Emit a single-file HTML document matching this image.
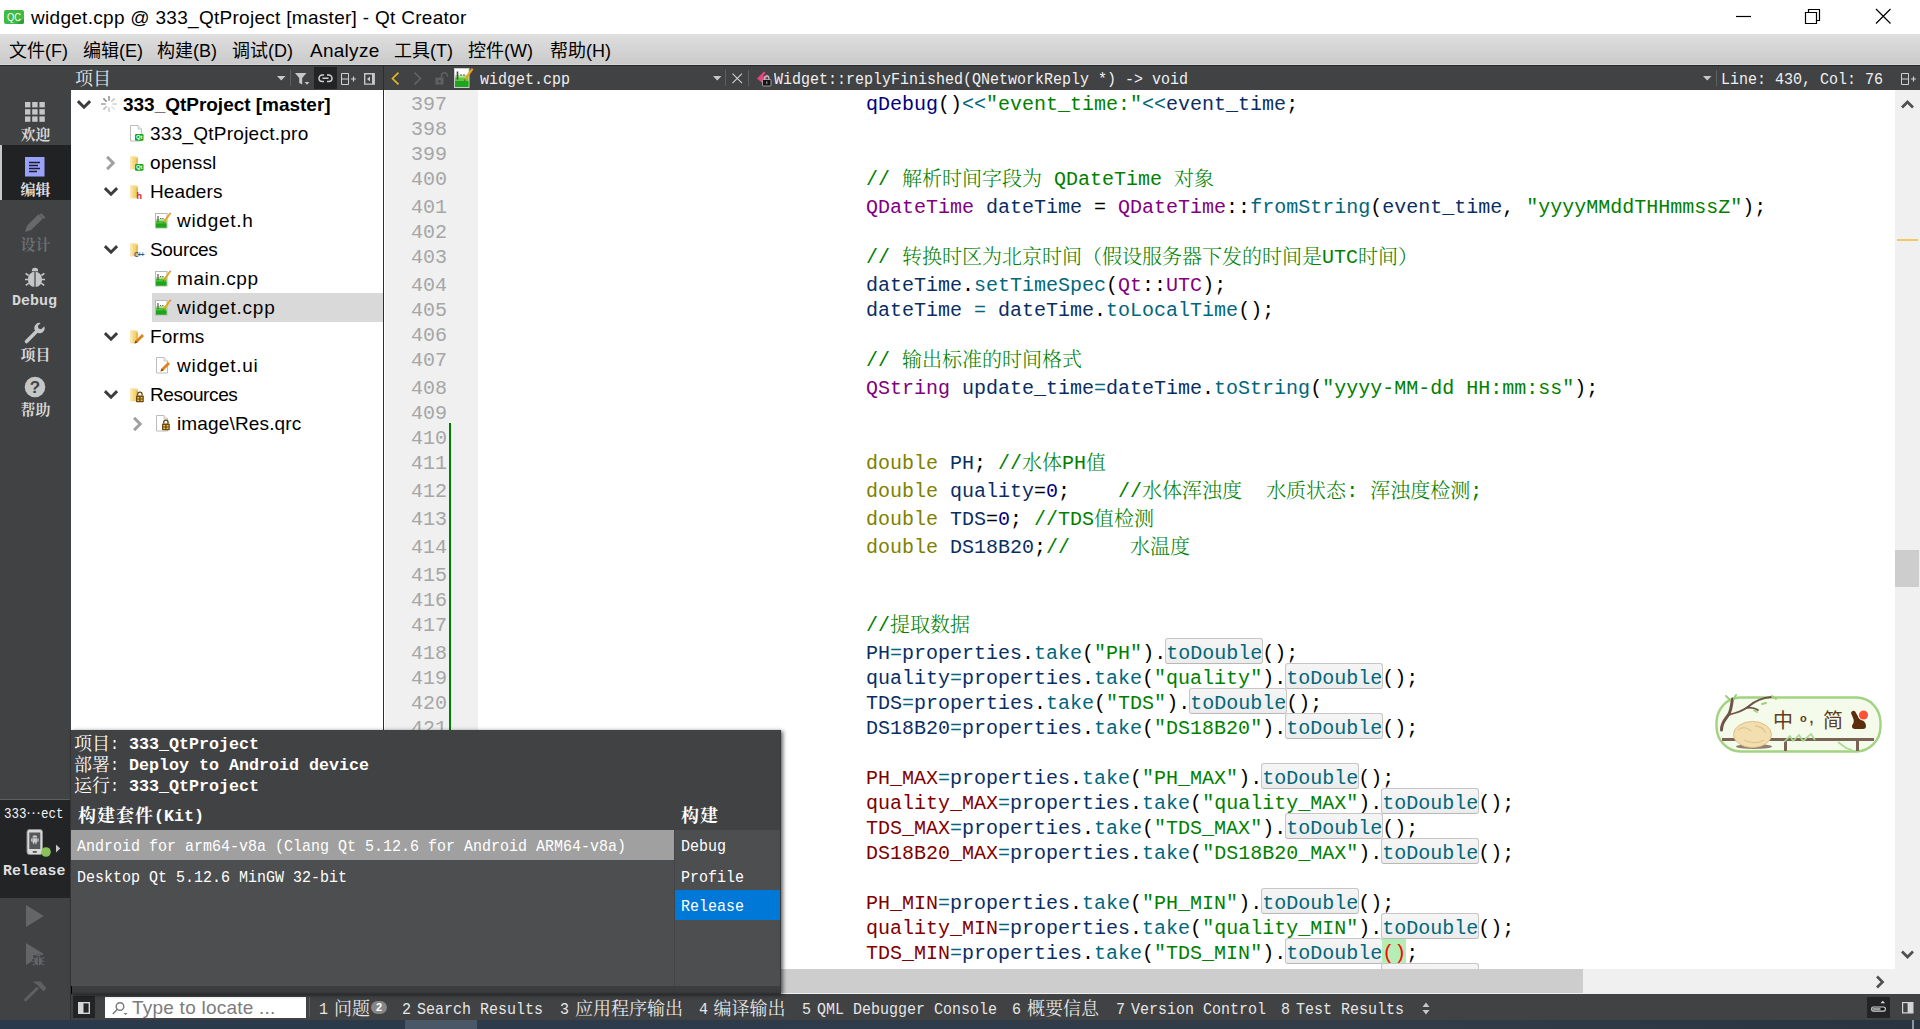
<!DOCTYPE html>
<html lang="zh-CN">
<head>
<meta charset="utf-8">
<title>widget.cpp @ 333_QtProject [master] - Qt Creator</title>
<style>
html,body{margin:0;padding:0;}
body{width:1920px;height:1029px;overflow:hidden;background:#fff;position:relative;font-family:"Liberation Sans","Noto Sans CJK SC",sans-serif;}
.abs{position:absolute;}
svg{position:absolute;overflow:visible;}
/* ---- title bar ---- */
#title{left:0;top:0;width:1920px;height:34px;background:#fff;}
#title .tt{left:31px;top:5px;font-size:19px;line-height:26px;color:#000;white-space:nowrap;letter-spacing:.29px;}
/* ---- menu ---- */
#menu{left:0;top:34px;width:1920px;height:31px;background:linear-gradient(#dfdfdf,#cacaca 30px,#d6d6d6 30px);}
#menu span{position:absolute;top:4px;font-size:18px;line-height:26px;color:#000;white-space:nowrap;font-family:"Liberation Sans","Noto Sans CJK SC",sans-serif;}
/* ---- dark chrome ---- */
#side{left:0;top:65px;width:71px;height:955px;background:#404244;}
#tbar{left:71px;top:65px;width:1849px;height:25px;background:#404244;}
#tbtop{left:0;top:65px;width:1920px;height:1px;background:#28292a;}
.sfont{font-family:"Liberation Mono","Noto Serif CJK SC",monospace;}
.cjk{font-family:"Liberation Serif","Noto Serif CJK SC",serif;}
.modelbl{position:absolute;left:0;width:71px;text-align:center;color:#d6d6d6;font-size:15px;line-height:18px;font-weight:700;white-space:nowrap;}
/* ---- project tree ---- */
#tree{left:71px;top:90px;width:312px;height:640px;background:#fff;}
.ti{position:absolute;font-size:19px;line-height:29px;height:29px;color:#000;white-space:nowrap;}
/* ---- editor ---- */
#split{left:383px;top:90px;width:1px;height:640px;background:#2d2e30;}
#gutter{left:385px;top:90px;width:93px;height:879px;background:#f0f0f0;overflow:hidden;}
#editor{left:478px;top:90px;width:1417px;height:879px;background:#fff;overflow:hidden;z-index:0;}
.ln{position:absolute;left:0;width:62px;text-align:right;height:25px;line-height:25px;font-size:20px;color:#a6a6a6;font-family:"Liberation Mono",monospace;}
.cl{position:absolute;left:388px;height:25px;line-height:25px;font-size:20px;color:#000;white-space:pre;font-family:"Liberation Mono","Noto Serif CJK SC",monospace;}
.cl i{font-style:normal;font-family:"Noto Serif CJK SC",serif;font-size:20px;line-height:0;font-weight:300;position:relative;top:1px;}
.k{color:#808000}.t{color:#800080}.f{color:#00677c}.v{color:#092e64}.s{color:#008000}.c{color:#008000}.n{color:#000080}.m{color:#800000}.q{color:#000080}.o{color:#00677c}
.box{position:relative;}
.box::before{content:"";position:absolute;left:-1px;right:-1px;top:-4px;height:24px;border:1px solid #c6c6c6;border-bottom-color:#b8b8b8;background:linear-gradient(#f5f5f5,#ececec);border-radius:3px;z-index:-1;}
.hl{position:relative;color:#ff0000;}
.hl::before{content:"";position:absolute;left:0;right:0;top:-3px;height:24px;background:#b4eeb4;z-index:-1;}
#vsb{left:1895px;top:90px;width:25px;height:879px;background:#f0f0f0;}
#hsb{left:781px;top:969px;width:1139px;height:25px;background:#f0f0f0;}
/* ---- status ---- */
#status{left:71px;top:994px;width:1849px;height:26px;background:#404244;}
#status .st{position:absolute;top:5px;font-size:15px;line-height:20px;color:#e6e6e6;white-space:pre;font-family:"Liberation Mono","Noto Serif CJK SC",monospace;}
#taskbar{left:0;top:1020px;width:1920px;height:9px;background:linear-gradient(90deg,#2a3a4c,#2d3b4b 40%,#333d49 70%,#2a3440);}
/* ---- popup ---- */
#popup{left:71px;top:730px;width:710px;height:264px;background:#404244;box-shadow:2px 1px 4px rgba(0,0,0,.6);}
#popup .pl{position:absolute;left:4px;font-size:17px;line-height:21px;color:#fff;white-space:pre;font-family:"Liberation Mono","Noto Serif CJK SC",monospace;}
#popup .it{position:absolute;font-size:15px;line-height:30px;color:#fff;white-space:pre;font-family:"Liberation Mono","Noto Serif CJK SC",monospace;}
</style>
</head>
<body>
<!-- title bar -->
<div id="title" class="abs">
  <svg style="left:4px;top:10px" width="20" height="14" viewBox="0 0 20 14"><rect x="0" y="0" width="20" height="14" rx="2" fill="#3dbb45"/><path d="M20 9v3a2 2 0 0 1-2 2h-6z" fill="#2f9e38"/><text x="10" y="11" font-family="Liberation Sans,sans-serif" font-size="10" fill="#fff" text-anchor="middle" textLength="14" lengthAdjust="spacingAndGlyphs">QC</text></svg>
  <div class="abs tt">widget.cpp @ 333_QtProject [master] - Qt Creator</div>
  <svg style="left:1735px;top:0" width="185" height="34" viewBox="0 0 185 34" fill="none" stroke="#000" stroke-width="1.2">
    <path d="M1 16.5h15"/>
    <path d="M70.500 12.500h11v11h-11z M73.500 12.500v-3h11v11h-3"/>
    <path d="M141 9l14.500 14.500 M155.500 9l-14.500 14.500"/>
  </svg>
</div>
<!-- menu bar -->
<div id="menu" class="abs">
  <span style="left:9px">文件(F)</span><span style="left:83px">编辑(E)</span><span style="left:157px">构建(B)</span><span style="left:232px">调试(D)</span><span style="left:310px;font-size:19px;letter-spacing:.27px">Analyze</span><span style="left:394px">工具(T)</span><span style="left:468px">控件(W)</span><span style="left:550px">帮助(H)</span>
</div>
<!-- sidebar -->
<div id="side" class="abs">
  <!-- welcome -->
  <svg style="left:25px;top:37px" width="20" height="20" viewBox="0 0 20 20" fill="#c6c6c6"><rect x="0" y="0" width="5.4" height="5.4"/><rect x="7.2" y="0" width="5.4" height="5.4"/><rect x="14.4" y="0" width="5.4" height="5.4"/><rect x="0" y="7.2" width="5.4" height="5.4"/><rect x="7.2" y="7.2" width="5.4" height="5.4"/><rect x="14.4" y="7.2" width="5.4" height="5.4"/><rect x="0" y="14.4" width="5.4" height="5.4"/><rect x="7.2" y="14.4" width="5.4" height="5.4"/><rect x="14.4" y="14.4" width="5.4" height="5.4"/></svg>
  <div class="modelbl cjk" style="top:61px">欢迎</div>
  <!-- edit (active) -->
  <div class="abs" style="left:0;top:80px;width:71px;height:55px;background:#202224"></div>
  <div class="abs" style="left:0;top:80px;width:2px;height:55px;background:#c8c8c8"></div>
  <svg style="left:25px;top:92px" width="20" height="20" viewBox="0 0 20 20"><rect width="19.5" height="19.5" fill="#9aa2f7"/><path d="M4 5.5h11M4 8.5h9M4 11.5h11M4 14.5h8" stroke="#1c1c2e" stroke-width="1.3"/></svg>
  <div class="modelbl cjk" style="top:116px;color:#e0e0e0">编辑</div>
  <!-- design (disabled) -->
  <svg style="left:24px;top:147px" width="22" height="22" viewBox="0 0 22 22" fill="#67696b"><path d="M1 20l2-6.2L14.5 2.3l4.2 4.2L7.2 18z"/><path d="M15.6 1.2l1.6-1.6 4.2 4.2-1.6 1.6z" transform="translate(0,1.6)"/></svg>
  <div class="modelbl cjk" style="top:171px;color:#6b6d6f">设计</div>
  <!-- debug -->
  <svg style="left:24px;top:201px" width="22" height="22" viewBox="0 0 22 22" fill="#c6c6c6" stroke="#c6c6c6"><path d="M7.800 5.200a3.200 3.400 0 0 1 6.400 0z" stroke="none"/><path d="M10.400 5.800v15c-4.200-.300-6.400-3.400-6.400-7.400 0-3.800 2-6.900 6.400-7.600zM11.600 5.800v15c4.200-.300 6.400-3.400 6.400-7.400 0-3.800-2-6.900-6.400-7.600z" stroke="none"/><path d="M4.600 9.500L1.600 7.300M4.200 13.500H1M4.800 17.200l-3 2.200M17.400 9.500l3-2.200M17.800 13.500H21M17.200 17.200l3 2.200" fill="none" stroke-width="1.600"/></svg>
  <span class="abs" style="left:11.5px;top:227.0px;font:bold 15px/20px 'Liberation Mono',monospace;color:#d6d6d6;white-space:pre;transform:scaleX(0.9998);transform-origin:0 0">Debug</span>
  <!-- projects -->
  <svg style="left:24px;top:257px" width="22" height="22" viewBox="0 0 22 22"><path d="M2.500 19.500L11.500 10.500" stroke="#c6c6c6" stroke-width="3.600" stroke-linecap="round"/><path d="M20.300 4.200a5.200 5.200 0 1 1-3.700-3.200l-2.800 3 .7 2.600 2.700.600z" fill="#c6c6c6"/></svg>
  <div class="modelbl cjk" style="top:281px">项目</div>
  <!-- help -->
  <svg style="left:24px;top:311px" width="22" height="22" viewBox="0 0 22 22"><circle cx="11" cy="11" r="10.300" fill="#c6c6c6"/><text x="11" y="17" font-family="Liberation Sans,sans-serif" font-weight="bold" font-size="17" fill="#404244" text-anchor="middle">?</text></svg>
  <div class="modelbl cjk" style="top:336px">帮助</div>

  <!-- target selector -->
  <div class="abs" style="left:0;top:734px;width:71px;height:1px;background:#5c5e60"></div>
  <div class="abs" style="left:0;top:735px;width:71px;height:98px;background:#222426"></div>
  <span class="abs" style="left:3.5px;top:740.0px;font:normal 14px/19px 'Liberation Mono',monospace;color:#f4f4f4;white-space:pre;transform:scaleX(0.8927);transform-origin:0 0">333</span><span class="abs" style="left:26.0px;top:737.5px;font:normal 15px/19px 'Noto Serif CJK SC',serif;color:#f4f4f4;white-space:pre;letter-spacing:0.00px">…</span><span class="abs" style="left:41.0px;top:740.0px;font:normal 14px/19px 'Liberation Mono',monospace;color:#f4f4f4;white-space:pre;transform:scaleX(0.8927);transform-origin:0 0">ect</span>
  <svg style="left:26px;top:764px" width="36" height="28" viewBox="0 0 36 28"><rect x="1" y="0.500" width="15.500" height="25" rx="2.500" fill="#d9d9d9" stroke="#8c8c8c"/><rect x="3.300" y="3.500" width="11" height="16.500" fill="#55585b"/><path d="M6.300 8.500a2.500 2.300 0 0 1 5 0z M6.300 9.200h5v4.300h-5z M5 9.400h.9v3.200H5z M11.700 9.400h.9v3.200h-.9z M7.200 13.500h1v1.700h-1z M9.400 13.500h1v1.700h-1z" fill="#c9c9c9"/><rect x="6.800" y="22" width="4" height="1.800" fill="#55585b"/><circle cx="20" cy="23" r="4.800" fill="#8ac25a"/><path d="M30 15.500l4.200 4-4.200 4z" fill="#c6c6c6"/></svg>
  <span class="abs" style="left:3.0px;top:797.0px;font:bold 15px/20px 'Liberation Mono',monospace;color:#e0e0e0;white-space:pre;transform:scaleX(0.9887);transform-origin:0 0">Release</span>
  <!-- run buttons -->
  <svg style="left:26px;top:840px" width="20" height="24" viewBox="0 0 20 24"><path d="M0 0L17.800 11 0 22z" fill="#646567"/></svg>
  <svg style="left:26px;top:878px" width="22" height="26" viewBox="0 0 22 26"><path d="M0 0L17.800 11 0 22z" fill="#646567"/><g stroke="#404244" stroke-width="2.400" fill="#404244"><ellipse cx="12.300" cy="17.600" rx="4.200" ry="5"/><path d="M7 13.500l10.600 0M6 17.600h12.600M7 21.800l10.600 0M12.300 11v2"/></g><g fill="#646567" stroke="#646567" stroke-width="1.100"><path d="M12.300 11.300a2.200 2.200 0 0 1 2.200 2h-4.400a2.200 2.200 0 0 1 2.200-2z" stroke="none"/><path d="M11.800 14v8.600c-2.300-.300-3.400-2.100-3.400-4.500 0-2.200 1-3.800 3.400-4.100zM12.800 14v8.600c2.300-.300 3.400-2.100 3.400-4.500 0-2.200-1-3.800-3.400-4.100z" stroke="none"/><path d="M8.600 15.800L6.400 14.300M8.300 18.200H5.900M8.800 20.600l-2 1.600M16 15.800l2.200-1.500M16.300 18.200h2.400M15.800 20.600l2 1.600" fill="none"/></g></svg>
  <svg style="left:22px;top:914px" width="28" height="26" viewBox="0 0 28 26"><path d="M2.700 21.700L15.800 8.800" stroke="#5e6062" stroke-width="3" fill="none"/><path d="M10.800 2.400h7.800l5.800 6.600-2.800 3.600-6.400-6.600z" fill="#5e6062"/></svg>
</div>
<div id="tbar" class="abs">
  <span class="abs" style="left:4.0px;top:1.0px;font:normal 18px/22px 'Noto Serif CJK SC',serif;color:#e6e6e6;white-space:pre;letter-spacing:0.00px">项目</span>
  <svg style="left:206px;top:11px" width="9" height="5" viewBox="0 0 9 5"><path d="M0 0h8.500L4.250 4.600z" fill="#c8c8c8"/></svg>
  <div class="abs" style="left:219px;top:5px;width:1px;height:16px;background:#5d5f61"></div>
  <svg style="left:224px;top:8px" width="15" height="12" viewBox="0 0 15 12" fill="#c8c8c8"><path d="M0 0h11.500L7.200 5v6.500l-3-1.500V5z"/><path d="M9.500 9h5L12 11.700z"/></svg>
  <div class="abs" style="left:243px;top:2px;width:23px;height:22px;background:#222426"></div>
  <svg style="left:247px;top:9px" width="15" height="9" viewBox="0 0 15 9" fill="none" stroke="#d0d0d0" stroke-width="1.500"><path d="M6 1H4.250a3.250 3.250 0 0 0 0 6.500H6M9 1h1.750a3.250 3.250 0 0 1 0 6.500H9M4.500 4.250h6"/></svg>
  <svg style="left:270px;top:8px" width="16" height="12" viewBox="0 0 16 12" fill="none" stroke="#d0d0d0" stroke-width="1"><path d="M0.500 0.500h7v11h-7zM0.500 6h7"/><path d="M10 6h5M12.500 3.500v5" stroke-width="1.200"/></svg>
  <svg style="left:293px;top:8px" width="11" height="12" viewBox="0 0 11 12"><path d="M0.700 0.700h9.500v10.400h-9.500z" fill="none" stroke="#c8c8c8" stroke-width="1.400"/><path d="M8 0.700h2.200v10.400h-2.200z" fill="#c8c8c8"/><path d="M6 3.400v5L3 5.900z" fill="#c8c8c8"/></svg>
  <div class="abs" style="left:312px;top:0;width:1px;height:25px;background:#2b2c2e"></div>
  <!-- editor toolbar -->
  <svg style="left:320px;top:7px" width="9" height="13" viewBox="0 0 9 13"><path d="M7.500 0.700L1.500 6.500l6 5.800" fill="none" stroke="#e6b820" stroke-width="1.700"/></svg>
  <svg style="left:342px;top:7px" width="9" height="13" viewBox="0 0 9 13"><path d="M1.500 0.700L7.500 6.500l-6 5.800" fill="none" stroke="#606264" stroke-width="1.700"/></svg>
  <svg style="left:364px;top:7px" width="14" height="13" viewBox="0 0 14 13"><rect x="0.500" y="5.500" width="8" height="7" fill="#5f6163"/><rect x="3.500" y="8" width="2" height="2.500" fill="#404244"/><path d="M6.500 5.500V3.800a3 3 0 0 1 6 0v1" fill="none" stroke="#5f6163" stroke-width="1.400"/></svg>
  <svg style="left:383px;top:2px" width="20" height="22" viewBox="0 0 20 22"><rect x="0.500" y="1.500" width="14.500" height="19" fill="#fff" stroke="#c9c9c9"/><rect x="1" y="9" width="13.500" height="11" fill="#5ecb3c"/><rect x="1" y="14" width="13.500" height="6" fill="#1fa41d"/><rect x="1" y="8" width="13.500" height="2.500" fill="#b5e89a"/><path d="M3.500 4.500v8" stroke="#444" stroke-width="1.600"/><path d="M6 8h2M9 8h2" stroke="#555" stroke-width="1.200"/><path d="M10 14l1.200-4L17.700 1l1.800 1.200L13 11.700z" fill="#e9a21c"/><path d="M10 14l.5-1.800 1.200.8z" fill="#333"/></svg>
  <span class="abs" style="left:409.0px;top:4.0px;font:normal 17px/22px 'Liberation Mono',monospace;color:#f0f0f0;white-space:pre;transform:scaleX(0.8822);transform-origin:0 0">widget.cpp</span>
  <svg style="left:642px;top:11px" width="9" height="5" viewBox="0 0 9 5"><path d="M0 0h8.500L4.250 4.600z" fill="#c8c8c8"/></svg>
  <div class="abs" style="left:654px;top:5px;width:1px;height:16px;background:#5d5f61"></div>
  <svg style="left:661px;top:8px" width="11" height="11" viewBox="0 0 11 11"><path d="M0.500 0.700l9.500 9.500M10 0.700l-9.500 9.500" stroke="#d0d0d0" stroke-width="1.100"/></svg>
  <div class="abs" style="left:677px;top:5px;width:1px;height:16px;background:#5d5f61"></div>
  <svg style="left:685px;top:5px" width="17" height="17" viewBox="0 0 17 17"><path d="M1 8.500L8 1.500l1.600 1.600L7 5.700l1.400 1.400 2.600-2.600L12.600 6 6 12.800z" fill="#e8457c"/><rect x="6.500" y="9.500" width="8.500" height="6.500" rx="0.800" fill="#141414" stroke="#bdbdbd" stroke-width="0.800"/><path d="M8.700 9.500V8a2.050 2.050 0 0 1 4.100 0v1.500" fill="none" stroke="#c8c8c8" stroke-width="1.200"/><rect x="10.100" y="11.500" width="1.300" height="2.300" fill="#999"/></svg>
  <span class="abs" style="left:703.0px;top:4.0px;font:normal 17px/22px 'Liberation Mono',monospace;color:#f0f0f0;white-space:pre;transform:scaleX(0.8822);transform-origin:0 0">Widget::replyFinished(QNetworkReply *) -&gt; void</span>
  <svg style="left:1632px;top:11px" width="9" height="5" viewBox="0 0 9 5"><path d="M0 0h8.500L4.250 4.600z" fill="#c8c8c8"/></svg>
  <div class="abs" style="left:1645px;top:5px;width:1px;height:16px;background:#5d5f61"></div>
  <span class="abs" style="left:1650.0px;top:4.0px;font:normal 17px/22px 'Liberation Mono',monospace;color:#f0f0f0;white-space:pre;transform:scaleX(0.8822);transform-origin:0 0">Line: 430, Col: 76</span>
  <svg style="left:1830px;top:8px" width="16" height="12" viewBox="0 0 16 12" fill="none" stroke="#d0d0d0" stroke-width="1"><path d="M0.500 0.500h7v11h-7zM0.500 6h7"/><path d="M10 6h5M12.500 3.500v5" stroke-width="1.200"/></svg>
</div>
<div id="tbtop" class="abs"></div>

<!-- project tree -->
<div id="tree" class="abs"><svg style="left:6.0px;top:10px" width="14" height="9" viewBox="0 0 14 9"><path d="M0.900 1.100L7 7.200l6.100-6.100" fill="none" stroke="#3c3c3c" stroke-width="2.900"/></svg><svg style="left:29px;top:5px" width="18" height="18" viewBox="-9 -9 18 18"><path d="M0.00 -3.20L0.00 -8.00" stroke="#9a9a9a" stroke-width="1.7"/><path d="M2.26 -2.26L5.66 -5.66" stroke="#c9c9c9" stroke-width="1.7"/><path d="M3.20 -0.00L8.00 -0.00" stroke="#d9d9d9" stroke-width="1.7"/><path d="M2.26 2.26L5.66 5.66" stroke="#e3e3e3" stroke-width="1.7"/><path d="M0.00 3.20L0.00 8.00" stroke="#cfcfcf" stroke-width="1.7"/><path d="M-2.26 2.26L-5.66 5.66" stroke="#bdbdbd" stroke-width="1.7"/><path d="M-3.20 0.00L-8.00 0.00" stroke="#ababab" stroke-width="1.7"/><path d="M-2.26 -2.26L-5.66 -5.66" stroke="#8e8e8e" stroke-width="1.7"/></svg><div class="ti" style="left:52px;top:0px;letter-spacing:-0.02px;font-weight:bold;">333_QtProject [master]</div><svg style="left:59px;top:35px" width="16" height="17" viewBox="0 0 16 17"><path d="M0.5 0.5h7.5l3.5 3.5v12h-11z" fill="#fff" stroke="#bdbdbd"/><path d="M8 0.5v3.5h3.5" fill="#eee" stroke="#bdbdbd" stroke-width=".8"/><rect x="5" y="9" width="8.500" height="6.800" rx="1.200" fill="#17a81a"/><text x="9.200" y="14.400" font-family="Liberation Sans,sans-serif" font-weight="bold" font-size="5.800" fill="#fff" text-anchor="middle">Qt</text></svg><div class="ti" style="left:79px;top:29px;letter-spacing:0.25px;">333_QtProject.pro</div><svg style="left:34.5px;top:66px" width="9" height="14" viewBox="0 0 9 14"><path d="M1.100 0.900L7.200 7l-6.100 6.100" fill="none" stroke="#a0a0a0" stroke-width="2.900"/></svg><svg style="left:59px;top:65px" width="16" height="16" viewBox="0 0 16 16"><path d="M0.500 1.500h6.500l1 1.200v10l-2.300 1.600h-5.200z" fill="#f5d67b"/><path d="M0.500 1.500h2.200v12.800h-2.200z" fill="#f9e6a8"/><path d="M5.700 14.300V4.200L8 2.700v10z" fill="#e6bd55"/><rect x="5" y="9" width="8.500" height="6.800" rx="1.200" fill="#17a81a"/><text x="9.200" y="14.400" font-family="Liberation Sans,sans-serif" font-weight="bold" font-size="5.800" fill="#fff" text-anchor="middle">Qt</text></svg><div class="ti" style="left:79px;top:58px;letter-spacing:0.14px;">openssl</div><svg style="left:32.5px;top:97px" width="14" height="9" viewBox="0 0 14 9"><path d="M0.900 1.100L7 7.200l6.100-6.100" fill="none" stroke="#3c3c3c" stroke-width="2.900"/></svg><svg style="left:59px;top:94px" width="16" height="16" viewBox="0 0 16 16"><path d="M0.500 1.500h6.500l1 1.200v10l-2.300 1.600h-5.200z" fill="#f5d67b"/><path d="M0.500 1.500h2.200v12.800h-2.200z" fill="#f9e6a8"/><path d="M5.700 14.300V4.200L8 2.700v10z" fill="#e6bd55"/><text x="6.5" y="14.5" font-family="Liberation Sans,sans-serif" font-weight="bold" font-size="9" fill="#e01b1b">h</text></svg><div class="ti" style="left:79px;top:87px;letter-spacing:0.10px;">Headers</div><svg style="left:84px;top:122px" width="17" height="17" viewBox="0 0 17 17"><rect x="0.5" y="1.5" width="11.5" height="14.5" fill="#fff" stroke="#b8b8b8"/><rect x="1" y="8" width="10.5" height="7.6" fill="#4fc23a"/><rect x="1" y="11.5" width="10.5" height="4.1" fill="#1ea31c"/><rect x="1" y="7" width="10.5" height="2" fill="#a8e28a"/><path d="M3 4v6" stroke="#555" stroke-width="1.2"/><path d="M5 6.5h1.3M7.2 6.5h1.3" stroke="#666" stroke-width="1"/><path d="M8 11.5l1-3.2L14.5 0.8l1.4 1L10.6 9.6z" fill="#e9a21c"/><path d="M14.5 0.8l1.4 1 .5-.9z" fill="#c0392b"/><path d="M8 11.5l.4-1.5 1 .7z" fill="#444"/></svg><div class="ti" style="left:106px;top:116px;letter-spacing:0.71px;">widget.h</div><svg style="left:32.5px;top:155px" width="14" height="9" viewBox="0 0 14 9"><path d="M0.900 1.100L7 7.200l6.100-6.100" fill="none" stroke="#3c3c3c" stroke-width="2.900"/></svg><svg style="left:59px;top:152px" width="16" height="16" viewBox="0 0 16 16"><path d="M0.500 1.500h6.500l1 1.200v10l-2.300 1.600h-5.200z" fill="#f5d67b"/><path d="M0.500 1.500h2.200v12.800h-2.200z" fill="#f9e6a8"/><path d="M5.700 14.300V4.200L8 2.700v10z" fill="#e6bd55"/><text x="4" y="14.5" font-family="Liberation Sans,sans-serif" font-weight="bold" font-size="6.500" fill="#2a5a8c" letter-spacing="-0.900">C++</text></svg><div class="ti" style="left:79px;top:145px;letter-spacing:-0.31px;">Sources</div><svg style="left:84px;top:180px" width="17" height="17" viewBox="0 0 17 17"><rect x="0.5" y="1.5" width="11.5" height="14.5" fill="#fff" stroke="#b8b8b8"/><rect x="1" y="8" width="10.5" height="7.6" fill="#4fc23a"/><rect x="1" y="11.5" width="10.5" height="4.1" fill="#1ea31c"/><rect x="1" y="7" width="10.5" height="2" fill="#a8e28a"/><path d="M3 4v6" stroke="#555" stroke-width="1.2"/><path d="M5 6.5h1.3M7.2 6.5h1.3" stroke="#666" stroke-width="1"/><path d="M8 11.5l1-3.2L14.5 0.8l1.4 1L10.6 9.6z" fill="#e9a21c"/><path d="M14.5 0.8l1.4 1 .5-.9z" fill="#c0392b"/><path d="M8 11.5l.4-1.5 1 .7z" fill="#444"/></svg><div class="ti" style="left:106px;top:174px;letter-spacing:0.55px;">main.cpp</div><div class="abs" style="left:81px;top:203px;width:231px;height:29px;background:#d9d9d9"></div><svg style="left:84px;top:209px" width="17" height="17" viewBox="0 0 17 17"><rect x="0.5" y="1.5" width="11.5" height="14.5" fill="#fff" stroke="#b8b8b8"/><rect x="1" y="8" width="10.5" height="7.6" fill="#4fc23a"/><rect x="1" y="11.5" width="10.5" height="4.1" fill="#1ea31c"/><rect x="1" y="7" width="10.5" height="2" fill="#a8e28a"/><path d="M3 4v6" stroke="#555" stroke-width="1.2"/><path d="M5 6.5h1.3M7.2 6.5h1.3" stroke="#666" stroke-width="1"/><path d="M8 11.5l1-3.2L14.5 0.8l1.4 1L10.6 9.6z" fill="#e9a21c"/><path d="M14.5 0.8l1.4 1 .5-.9z" fill="#c0392b"/><path d="M8 11.5l.4-1.5 1 .7z" fill="#444"/></svg><div class="ti" style="left:106px;top:203px;letter-spacing:0.77px;">widget.cpp</div><svg style="left:32.5px;top:242px" width="14" height="9" viewBox="0 0 14 9"><path d="M0.900 1.100L7 7.200l6.100-6.100" fill="none" stroke="#3c3c3c" stroke-width="2.900"/></svg><svg style="left:59px;top:239px" width="16" height="16" viewBox="0 0 16 16"><path d="M0.500 1.500h6.500l1 1.200v10l-2.300 1.600h-5.200z" fill="#f5d67b"/><path d="M0.500 1.500h2.200v12.800h-2.200z" fill="#f9e6a8"/><path d="M5.700 14.300V4.200L8 2.700v10z" fill="#e6bd55"/><path d="M4.5 14.5l1-3 6.5-6.5 2 2-6.5 6.5z" fill="#e0801a"/><path d="M4.5 14.5l1-3 2 2z" fill="#7a4a10"/></svg><div class="ti" style="left:79px;top:232px;letter-spacing:0.13px;">Forms</div><svg style="left:85px;top:267px" width="16" height="17" viewBox="0 0 16 17"><path d="M0.5 0.5h7.5l3.5 3.5v12h-11z" fill="#fff" stroke="#bdbdbd"/><path d="M8 0.5v3.5h3.5" fill="#eee" stroke="#bdbdbd" stroke-width=".8"/><path d="M4.5 14.5l1-3 6.5-6.5 2 2-6.5 6.5z" fill="#e0801a"/><path d="M4.5 14.5l1-3 2 2z" fill="#7a4a10"/></svg><div class="ti" style="left:106px;top:261px;letter-spacing:0.72px;">widget.ui</div><svg style="left:32.5px;top:300px" width="14" height="9" viewBox="0 0 14 9"><path d="M0.900 1.100L7 7.200l6.100-6.100" fill="none" stroke="#3c3c3c" stroke-width="2.900"/></svg><svg style="left:59px;top:297px" width="16" height="16" viewBox="0 0 16 16"><path d="M0.500 1.500h6.500l1 1.200v10l-2.300 1.600h-5.200z" fill="#f5d67b"/><path d="M0.500 1.500h2.200v12.800h-2.200z" fill="#f9e6a8"/><path d="M5.700 14.300V4.200L8 2.700v10z" fill="#e6bd55"/><rect x="6" y="8.500" width="7.800" height="6.800" rx="0.800" fill="#6b4a12"/><path d="M7.700 8.500v-1.200a2.200 2.200 0 0 1 4.400 0v1.200" fill="none" stroke="#6b4a12" stroke-width="1.300"/><path d="M7.300 10h1.900v1.500h-1.900z M10.600 10h1.900v1.500h-1.900z M7.300 12.500h1.900v1.500h-1.900z M10.600 12.500h1.900v1.500h-1.900z" fill="#f1c24c"/></svg><div class="ti" style="left:79px;top:290px;letter-spacing:-0.37px;">Resources</div><svg style="left:62.0px;top:327px" width="9" height="14" viewBox="0 0 9 14"><path d="M1.100 0.900L7.200 7l-6.100 6.100" fill="none" stroke="#a0a0a0" stroke-width="2.900"/></svg><svg style="left:85px;top:325px" width="16" height="17" viewBox="0 0 16 17"><path d="M0.5 0.5h7.5l3.5 3.5v12h-11z" fill="#fff" stroke="#bdbdbd"/><path d="M8 0.5v3.5h3.5" fill="#eee" stroke="#bdbdbd" stroke-width=".8"/><rect x="6" y="8.500" width="7.800" height="6.800" rx="0.800" fill="#6b4a12"/><path d="M7.700 8.500v-1.200a2.200 2.200 0 0 1 4.400 0v1.200" fill="none" stroke="#6b4a12" stroke-width="1.300"/><path d="M7.300 10h1.900v1.500h-1.900z M10.600 10h1.900v1.500h-1.900z M7.300 12.500h1.900v1.500h-1.900z M10.600 12.500h1.900v1.500h-1.900z" fill="#f1c24c"/></svg><div class="ti" style="left:106px;top:319px;letter-spacing:0.15px;">image\Res.qrc</div></div>
<div id="split" class="abs"></div>

<!-- editor -->
<div id="gutter" class="abs"><div class="ln" style="top:2px">397</div><div class="ln" style="top:27px">398</div><div class="ln" style="top:52px">399</div><div class="ln" style="top:77px">400</div><div class="ln" style="top:105px">401</div><div class="ln" style="top:130px">402</div><div class="ln" style="top:155px">403</div><div class="ln" style="top:183px">404</div><div class="ln" style="top:208px">405</div><div class="ln" style="top:233px">406</div><div class="ln" style="top:258px">407</div><div class="ln" style="top:286px">408</div><div class="ln" style="top:311px">409</div><div class="ln" style="top:336px">410</div><div class="ln" style="top:361px">411</div><div class="ln" style="top:389px">412</div><div class="ln" style="top:417px">413</div><div class="ln" style="top:445px">414</div><div class="ln" style="top:473px">415</div><div class="ln" style="top:498px">416</div><div class="ln" style="top:523px">417</div><div class="ln" style="top:551px">418</div><div class="ln" style="top:576px">419</div><div class="ln" style="top:601px">420</div><div class="ln" style="top:626px">421</div><div class="ln" style="top:651px">422</div><div class="ln" style="top:676px">423</div><div class="ln" style="top:701px">424</div><div class="ln" style="top:726px">425</div><div class="ln" style="top:751px">426</div><div class="ln" style="top:776px">427</div><div class="ln" style="top:801px">428</div><div class="ln" style="top:826px">429</div><div class="ln" style="top:851px">430</div><div class="ln" style="top:876px">431</div><div class="abs" style="left:64px;top:333px;width:2px;height:560px;background:#008000"></div></div>
<div id="editor" class="abs"><div class="cl" style="top:2px"><span class="q">qDebug</span>()<span class="o">&lt;&lt;</span><span class="s">&quot;event_time:&quot;</span><span class="o">&lt;&lt;</span><span class="v">event_time</span>;</div><div class="cl" style="top:77px"><span class="c">// <i>解析时间字段为</i> QDateTime <i>对象</i></span></div><div class="cl" style="top:105px"><span class="t">QDateTime</span> <span class="v">dateTime</span> = <span class="t">QDateTime</span>::<span class="f">fromString</span>(<span class="v">event_time</span>, <span class="s">&quot;yyyyMMddTHHmmssZ&quot;</span>);</div><div class="cl" style="top:155px"><span class="c">// <i>转换时区为北京时间（假设服务器下发的时间是</i>UTC<i>时间）</i></span></div><div class="cl" style="top:183px"><span class="v">dateTime</span>.<span class="f">setTimeSpec</span>(<span class="t">Qt</span>::<span class="t">UTC</span>);</div><div class="cl" style="top:208px"><span class="v">dateTime</span> <span class="o">=</span> <span class="v">dateTime</span>.<span class="f">toLocalTime</span>();</div><div class="cl" style="top:258px"><span class="c">// <i>输出标准的时间格式</i></span></div><div class="cl" style="top:286px"><span class="t">QString</span> <span class="v">update_time</span><span class="o">=</span><span class="v">dateTime</span>.<span class="f">toString</span>(<span class="s">&quot;yyyy-MM-dd HH:mm:ss&quot;</span>);</div><div class="cl" style="top:361px"><span class="k">double</span> <span class="v">PH</span>; <span class="c">//<i>水体</i>PH<i>值</i></span></div><div class="cl" style="top:389px"><span class="k">double</span> <span class="v">quality</span>=<span class="n">0</span>;    <span class="c">//<i>水体浑浊度</i>  <i>水质状态</i>: <i>浑浊度检测</i>;</span></div><div class="cl" style="top:417px"><span class="k">double</span> <span class="v">TDS</span>=<span class="n">0</span>; <span class="c">//TDS<i>值检测</i></span></div><div class="cl" style="top:445px"><span class="k">double</span> <span class="v">DS18B20</span>;<span class="c">//     <i>水温度</i></span></div><div class="cl" style="top:523px"><span class="c">//<i>提取数据</i></span></div><div class="cl" style="top:551px"><span class="v">PH</span><span class="o">=</span><span class="v">properties</span>.<span class="f">take</span>(<span class="s">&quot;PH&quot;</span>).<span class="f box">toDouble</span>();</div><div class="cl" style="top:576px"><span class="v">quality</span><span class="o">=</span><span class="v">properties</span>.<span class="f">take</span>(<span class="s">&quot;quality&quot;</span>).<span class="f box">toDouble</span>();</div><div class="cl" style="top:601px"><span class="v">TDS</span><span class="o">=</span><span class="v">properties</span>.<span class="f">take</span>(<span class="s">&quot;TDS&quot;</span>).<span class="f box">toDouble</span>();</div><div class="cl" style="top:626px"><span class="v">DS18B20</span><span class="o">=</span><span class="v">properties</span>.<span class="f">take</span>(<span class="s">&quot;DS18B20&quot;</span>).<span class="f box">toDouble</span>();</div><div class="cl" style="top:676px"><span class="m">PH_MAX</span><span class="o">=</span><span class="v">properties</span>.<span class="f">take</span>(<span class="s">&quot;PH_MAX&quot;</span>).<span class="f box">toDouble</span>();</div><div class="cl" style="top:701px"><span class="m">quality_MAX</span><span class="o">=</span><span class="v">properties</span>.<span class="f">take</span>(<span class="s">&quot;quality_MAX&quot;</span>).<span class="f box">toDouble</span>();</div><div class="cl" style="top:726px"><span class="m">TDS_MAX</span><span class="o">=</span><span class="v">properties</span>.<span class="f">take</span>(<span class="s">&quot;TDS_MAX&quot;</span>).<span class="f box">toDouble</span>();</div><div class="cl" style="top:751px"><span class="m">DS18B20_MAX</span><span class="o">=</span><span class="v">properties</span>.<span class="f">take</span>(<span class="s">&quot;DS18B20_MAX&quot;</span>).<span class="f box">toDouble</span>();</div><div class="cl" style="top:801px"><span class="m">PH_MIN</span><span class="o">=</span><span class="v">properties</span>.<span class="f">take</span>(<span class="s">&quot;PH_MIN&quot;</span>).<span class="f box">toDouble</span>();</div><div class="cl" style="top:826px"><span class="m">quality_MIN</span><span class="o">=</span><span class="v">properties</span>.<span class="f">take</span>(<span class="s">&quot;quality_MIN&quot;</span>).<span class="f box">toDouble</span>();</div><div class="cl" style="top:851px"><span class="m">TDS_MIN</span><span class="o">=</span><span class="v">properties</span>.<span class="f">take</span>(<span class="s">&quot;TDS_MIN&quot;</span>).<span class="f box">toDouble</span><span class="hl">()</span>;</div><div class="cl" style="top:876px"><span class="m">DS18B20_MIN</span><span class="o">=</span><span class="v">properties</span>.<span class="f">take</span>(<span class="s">&quot;DS18B20_MIN&quot;</span>).<span class="f box">toDouble</span>();</div></div>
<div id="vsb" class="abs">
  <svg style="left:5px;top:9px" width="15" height="10" viewBox="0 0 15 10"><path d="M2 8.500l5.500-5.500 5.500 5.500" fill="none" stroke="#505050" stroke-width="2.700"/></svg>
  <svg style="left:5px;top:860px" width="15" height="10" viewBox="0 0 15 10"><path d="M2 1.500l5.500 5.500 5.500-5.500" fill="none" stroke="#505050" stroke-width="2.700"/></svg>
  <div class="abs" style="left:0;top:460px;width:24px;height:37px;background:#cdcdcd"></div>
  <div class="abs" style="left:2px;top:149px;width:21px;height:2px;background:#f0c868"></div>
</div>
<div id="hsb" class="abs">
  <div class="abs" style="left:0;top:0;width:802px;height:24px;background:#cdcdcd"></div>
  <svg style="left:1094px;top:6px" width="10" height="14" viewBox="0 0 10 14"><path d="M2 1.500l5.500 5.500-5.500 5.500" fill="none" stroke="#505050" stroke-width="2.700"/></svg>
</div>

<!-- IME sticker -->
<svg style="left:1710px;top:690px;z-index:5" width="180" height="70" viewBox="0 0 180 70">
  <rect x="6.500" y="7.500" width="164" height="54" rx="24" ry="25" fill="#f4fbea" stroke="#a2d283" stroke-width="2.400"/>
  <path d="M12 49.500h152" stroke="#7a6355" stroke-width="2.800" fill="none"/>
  <path d="M75.500 49v12M147.500 49v12" stroke="#7a6355" stroke-width="3" fill="none"/>
  <path d="M11.500 40c0-9 5-11 8-17 2-5 2-9 3-14" stroke="#6e5548" stroke-width="3" fill="none" stroke-linecap="round"/><path d="M19 25c8-3 13-3 20-9 6-5 12-8 22-9M36 18c5-1 9 0 12 2" stroke="#6e5548" stroke-width="1.800" fill="none" stroke-linecap="round"/>
  <path d="M16 6l3 3M26 5l-2 4M62 6l4 3M52 14l4-1M44 20l3 2" stroke="#9ad07a" stroke-width="2" stroke-linecap="round"/>
  <path d="M74 52l6-6 3 5 6-6 4 6 8-7 4 6M128 52l8 6 6 2" stroke="#a9d98e" stroke-width="1.600" fill="none"/>
  <ellipse cx="44" cy="56.500" rx="18" ry="2.500" fill="#6e5548" opacity=".75"/>
  <ellipse cx="42.500" cy="44.500" rx="19" ry="13" fill="#f3deb0" stroke="#dcc089" stroke-width="1"/>
  <path d="M28 40c4-3 9-3 13 1M34 50c5 3 14 4 20 0M45 36c5 0 9 3 11 7" stroke="#e2c690" stroke-width="1.300" fill="none"/>
  <text x="63" y="37.500" font-family="Liberation Sans,Noto Sans CJK SC,sans-serif" font-size="20" fill="#5f3d1f">中</text>
  <text x="90" y="32" font-family="Liberation Sans,sans-serif" font-size="11" font-weight="bold" fill="#5f3d1f">o</text>
  <text x="99.500" y="33" font-family="Liberation Sans,sans-serif" font-size="14" font-weight="bold" fill="#5f3d1f">,</text>
  <text x="113" y="37.500" font-family="Liberation Sans,Noto Sans CJK SC,sans-serif" font-size="20" fill="#5f3d1f">简</text>
  <path d="M141 23c1-3 4-3 5 0l3 5c3 1 7 4 7 8 0 2-1 3-3 3h-8c-3 0-4-3-2-5 1-2 1-4 0-6z" fill="#5b2e0d"/>
  <circle cx="153.500" cy="25" r="5.600" fill="#fff"/>
  <circle cx="153.500" cy="25" r="4.600" fill="#ff5232"/>
</svg>
<!-- status bar -->
<div id="status" class="abs">
  <div class="abs" style="left:-1px;top:0;width:1px;height:26px;background:#303234"></div>
  <div class="abs" style="left:2px;top:2px;width:22px;height:22px;background:#222426"></div>
  <svg style="left:7px;top:8px" width="12" height="12" viewBox="0 0 12 12"><rect x="0.700" y="0.700" width="10.600" height="10.600" fill="none" stroke="#d6d6d6" stroke-width="1.400"/><rect x="0.700" y="0.700" width="4.800" height="10.600" fill="#d6d6d6"/></svg>
  <div class="abs" style="left:34px;top:3px;width:201px;height:21px;background:#fff"></div>
  <svg style="left:41px;top:8px" width="17" height="13" viewBox="0 0 17 13" fill="none" stroke="#777" stroke-width="1.400"><circle cx="8" cy="4.500" r="3.800"/><path d="M5.300 7.300L0.800 12"/><path d="M11.500 11h4l-2 2z" fill="#777" stroke="none"/></svg>
  <div class="abs" style="left:61px;top:3px;font-size:19px;line-height:21px;color:#7c7c7c;white-space:nowrap;font-family:'Liberation Sans',sans-serif;letter-spacing:.23px">Type to locate ...</div>
  <div class="abs" style="left:238px;top:3px;width:1px;height:20px;background:#5d5f61"></div>
  <span class="abs" style="left:248.0px;top:4.5px;font:normal 17px/22px 'Liberation Mono',monospace;color:#e6e6e6;white-space:pre;transform:scaleX(0.8822);transform-origin:0 0">1</span><span class="abs" style="left:263.0px;top:2.0px;font:normal 18px/22px 'Noto Serif CJK SC',serif;color:#e6e6e6;white-space:pre;letter-spacing:0.00px">问题</span>
  <span class="abs" style="left:331.0px;top:4.5px;font:normal 17px/22px 'Liberation Mono',monospace;color:#e6e6e6;white-space:pre;transform:scaleX(0.8822);transform-origin:0 0">2</span><span class="abs" style="left:346.0px;top:4.5px;font:normal 17px/22px 'Liberation Mono',monospace;color:#e6e6e6;white-space:pre;transform:scaleX(0.8822);transform-origin:0 0">Search Results</span>
  <span class="abs" style="left:489.0px;top:4.5px;font:normal 17px/22px 'Liberation Mono',monospace;color:#e6e6e6;white-space:pre;transform:scaleX(0.8822);transform-origin:0 0">3</span><span class="abs" style="left:504.0px;top:2.0px;font:normal 18px/22px 'Noto Serif CJK SC',serif;color:#e6e6e6;white-space:pre;letter-spacing:0.00px">应用程序输出</span>
  <span class="abs" style="left:627.5px;top:4.5px;font:normal 17px/22px 'Liberation Mono',monospace;color:#e6e6e6;white-space:pre;transform:scaleX(0.8822);transform-origin:0 0">4</span><span class="abs" style="left:642.5px;top:2.0px;font:normal 18px/22px 'Noto Serif CJK SC',serif;color:#e6e6e6;white-space:pre;letter-spacing:0.00px">编译输出</span>
  <span class="abs" style="left:730.5px;top:4.5px;font:normal 17px/22px 'Liberation Mono',monospace;color:#e6e6e6;white-space:pre;transform:scaleX(0.8822);transform-origin:0 0">5</span><span class="abs" style="left:745.5px;top:4.5px;font:normal 17px/22px 'Liberation Mono',monospace;color:#e6e6e6;white-space:pre;transform:scaleX(0.8822);transform-origin:0 0">QML Debugger Console</span>
  <span class="abs" style="left:941.0px;top:4.5px;font:normal 17px/22px 'Liberation Mono',monospace;color:#e6e6e6;white-space:pre;transform:scaleX(0.8822);transform-origin:0 0">6</span><span class="abs" style="left:956.0px;top:2.0px;font:normal 18px/22px 'Noto Serif CJK SC',serif;color:#e6e6e6;white-space:pre;letter-spacing:0.00px">概要信息</span>
  <span class="abs" style="left:1045.0px;top:4.5px;font:normal 17px/22px 'Liberation Mono',monospace;color:#e6e6e6;white-space:pre;transform:scaleX(0.8822);transform-origin:0 0">7</span><span class="abs" style="left:1060.0px;top:4.5px;font:normal 17px/22px 'Liberation Mono',monospace;color:#e6e6e6;white-space:pre;transform:scaleX(0.8822);transform-origin:0 0">Version Control</span>
  <span class="abs" style="left:1210.0px;top:4.5px;font:normal 17px/22px 'Liberation Mono',monospace;color:#e6e6e6;white-space:pre;transform:scaleX(0.8822);transform-origin:0 0">8</span><span class="abs" style="left:1225.0px;top:4.5px;font:normal 17px/22px 'Liberation Mono',monospace;color:#e6e6e6;white-space:pre;transform:scaleX(0.8822);transform-origin:0 0">Test Results</span>
  
  <div class="abs" style="left:300px;top:7px;width:16px;height:13px;border-radius:6.5px;background:#868686;color:#fff;font-size:11px;line-height:13px;font-weight:bold;text-align:center;font-family:'Liberation Sans',sans-serif">2</div>
  <svg style="left:1351px;top:8px" width="8" height="13" viewBox="0 0 8 13" fill="#c8c8c8"><path d="M0.500 5L4 0.500 7.500 5zM0.500 8L4 12.500 7.500 8z"/></svg>
  <div class="abs" style="left:1796px;top:3px;width:23px;height:21px;background:#222426"></div>
  <svg style="left:1800px;top:6px" width="15" height="12" viewBox="0 0 15 12"><path d="M9.500 3.200L11.800 0.700 14.100 3.200z" fill="#d6d6d6"/><rect x="0.700" y="7" width="13.600" height="4.200" rx="1.600" fill="#111" stroke="#d6d6d6" stroke-width="1.200"/><rect x="1.500" y="7.800" width="8" height="2.600" fill="#9a9a9a"/></svg>
  <svg style="left:1831px;top:8px" width="12" height="12" viewBox="0 0 12 12"><rect x="0.600" y="0.600" width="10.300" height="10.300" fill="none" stroke="#d6d6d6" stroke-width="1.200"/><rect x="5.600" y="0.600" width="5.300" height="10.300" fill="#d6d6d6"/></svg>
</div>
<div id="taskbar" class="abs"><div class="abs" style="left:405px;top:0;width:72px;height:9px;background:#4a5766"></div><div class="abs" style="left:1912px;top:0;width:2px;height:9px;background:#8a94a3"></div></div>

<!-- popup -->
<div id="popup" class="abs">
  <div class="abs" style="left:709px;top:0;width:1px;height:264px;background:#38393b;z-index:2"></div>
  <div class="abs" style="left:-1px;top:0;width:1px;height:264px;background:#323436"></div>
  <span class="abs" style="left:3.0px;top:1.0px;font:normal 18px/22px 'Noto Serif CJK SC',serif;color:#fff;white-space:pre;letter-spacing:0.00px">项目</span><span class="abs" style="left:39.0px;top:3.5px;font:normal 17px/22px 'Liberation Mono',monospace;color:#fff;white-space:pre;transform:scaleX(0.8822);transform-origin:0 0">: </span><span class="abs" style="left:58.0px;top:3.5px;font:bold 17px/22px 'Liberation Mono',monospace;color:#fff;white-space:pre;transform:scaleX(0.9802);transform-origin:0 0">333_QtProject</span>
  <span class="abs" style="left:3.0px;top:22.0px;font:normal 18px/22px 'Noto Serif CJK SC',serif;color:#fff;white-space:pre;letter-spacing:0.00px">部署</span><span class="abs" style="left:39.0px;top:24.5px;font:normal 17px/22px 'Liberation Mono',monospace;color:#fff;white-space:pre;transform:scaleX(0.8822);transform-origin:0 0">: </span><span class="abs" style="left:58.0px;top:24.5px;font:bold 17px/22px 'Liberation Mono',monospace;color:#fff;white-space:pre;transform:scaleX(0.9802);transform-origin:0 0">Deploy to Android device</span>
  <span class="abs" style="left:3.0px;top:43.0px;font:normal 18px/22px 'Noto Serif CJK SC',serif;color:#fff;white-space:pre;letter-spacing:0.00px">运行</span><span class="abs" style="left:39.0px;top:45.5px;font:normal 17px/22px 'Liberation Mono',monospace;color:#fff;white-space:pre;transform:scaleX(0.8822);transform-origin:0 0">: </span><span class="abs" style="left:58.0px;top:45.5px;font:bold 17px/22px 'Liberation Mono',monospace;color:#fff;white-space:pre;transform:scaleX(0.9802);transform-origin:0 0">333_QtProject</span>
  <span class="abs" style="left:7.0px;top:73.0px;font:bold 18px/22px 'Noto Serif CJK SC',serif;color:#fff;white-space:pre;letter-spacing:1.00px">构建套件</span><span class="abs" style="left:83.0px;top:75.5px;font:bold 17px/22px 'Liberation Mono',monospace;color:#fff;white-space:pre;transform:scaleX(0.9802);transform-origin:0 0">(Kit)</span>
  <span class="abs" style="left:610.0px;top:73.0px;font:bold 18px/22px 'Noto Serif CJK SC',serif;color:#fff;white-space:pre;letter-spacing:1.00px">构建</span>
  <div class="abs" style="left:0;top:100px;width:710px;height:156px;background:#4d4e50"></div>
  <div class="abs" style="left:603px;top:100px;width:1px;height:156px;background:#434446"></div>
  <div class="abs" style="left:0;top:256px;width:710px;height:8px;background:linear-gradient(#3d3e40,#3a3b3d 70%,#2f3032)"></div>
  <div class="abs" style="left:0;top:256px;width:1px;height:8px;background:#000"></div>
  <div class="abs" style="left:0;top:100px;width:603px;height:30px;background:#a0a0a0"></div>
  <span class="abs" style="left:6.0px;top:105.5px;font:normal 17px/22px 'Liberation Mono',monospace;color:#fff;white-space:pre;transform:scaleX(0.8822);transform-origin:0 0">Android for arm64-v8a (Clang Qt 5.12.6 for Android ARM64-v8a)</span>
  <span class="abs" style="left:6.0px;top:136.5px;font:normal 17px/22px 'Liberation Mono',monospace;color:#fff;white-space:pre;transform:scaleX(0.8822);transform-origin:0 0">Desktop Qt 5.12.6 MinGW 32-bit</span>
  <span class="abs" style="left:610.0px;top:105.5px;font:normal 17px/22px 'Liberation Mono',monospace;color:#fff;white-space:pre;transform:scaleX(0.8822);transform-origin:0 0">Debug</span>
  <span class="abs" style="left:610.0px;top:136.5px;font:normal 17px/22px 'Liberation Mono',monospace;color:#fff;white-space:pre;transform:scaleX(0.8822);transform-origin:0 0">Profile</span>
  <div class="abs" style="left:604px;top:160px;width:106px;height:30px;background:#0078d7"></div>
  <span class="abs" style="left:610.0px;top:165.5px;font:normal 17px/22px 'Liberation Mono',monospace;color:#fff;white-space:pre;transform:scaleX(0.8822);transform-origin:0 0">Release</span>
</div>
</body>
</html>
